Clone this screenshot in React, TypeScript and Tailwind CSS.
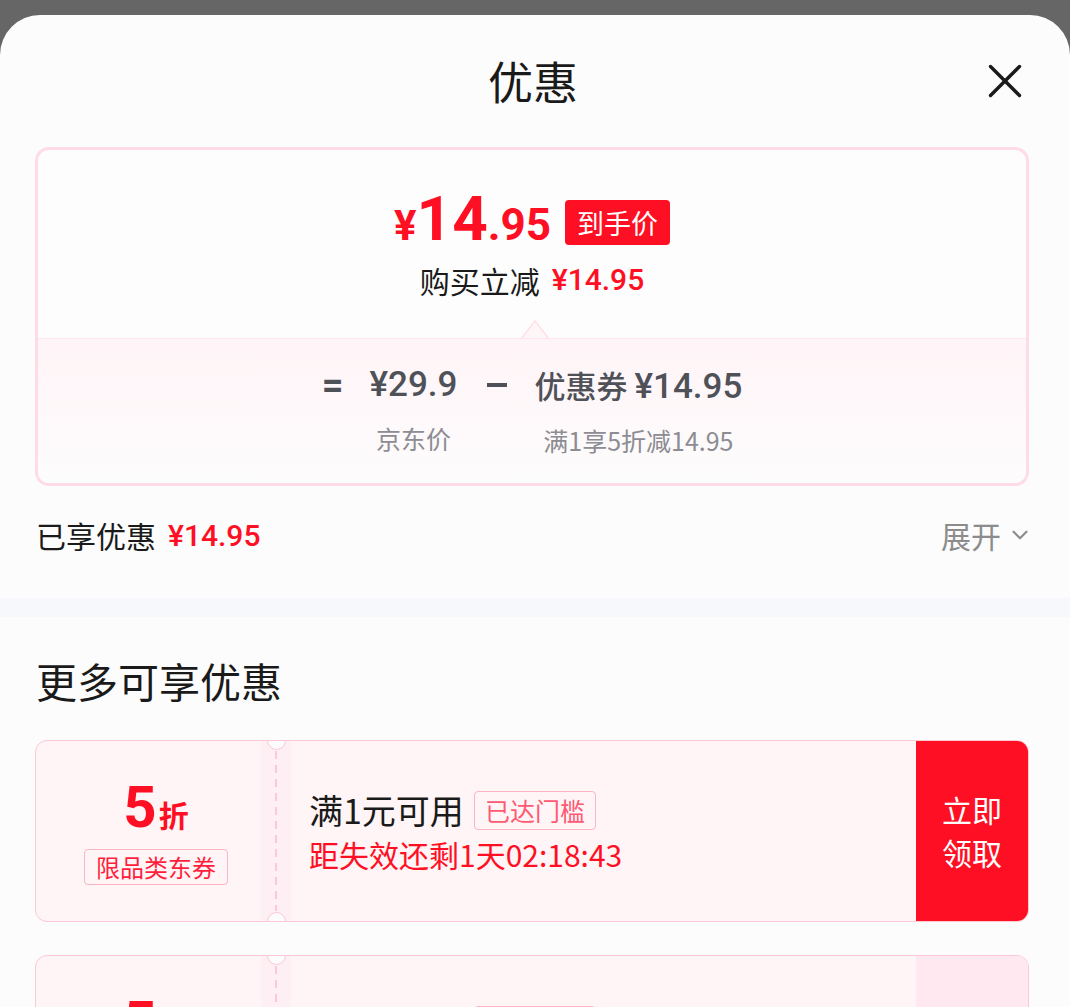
import { X, ChevronDown } from "lucide-react";

const cjk = "font-['Noto_Sans_CJK_SC',sans-serif]";
const num = "font-['Roboto','Noto_Sans_CJK_SC',sans-serif]";

interface CouponProps {
  active: boolean;
}

function Coupon({ active }: CouponProps) {
  return (
    <div className="relative mx-[35px] flex h-[182px] w-[994px] shrink-0 overflow-hidden rounded-[12px] border border-[#fcc8d5] bg-[#fff5f7]">
      {/* left: discount */}
      <div className="flex w-[225px] flex-col items-center justify-center pl-[15px]">
        <div className={`flex items-baseline font-bold text-[#ff0f23] ${num}`}>
          <span className="text-[58px] leading-[58px]">5</span>
          <span className={`ml-[2px] text-[30px] ${cjk}`}>折</span>
        </div>
        <span className="mt-[12px] rounded-[4px] border border-[#fdb4c3] px-[11px] text-[24px] leading-[34px] text-[#ff1e3c]">
          限品类东券
        </span>
      </div>

      {/* perforation */}
      <div className="flex w-[30px] justify-center bg-[#fdeff3]">
        <div className="mt-[10px] mb-[10px] w-[2px] bg-[repeating-linear-gradient(to_bottom,#fcc8d5_0_8px,transparent_8px_14px)]" />
      </div>
      <div className="absolute top-[-10px] left-[231px] h-[19px] w-[19px] rounded-full border border-[#fcc8d5] bg-[#fcfcfc]" />
      <div className="absolute bottom-[-10px] left-[231px] h-[19px] w-[19px] rounded-full border border-[#fcc8d5] bg-[#fcfcfc]" />

      {/* middle: rule */}
      <div className="flex flex-1 flex-col justify-center pl-[18px]">
        <div className="flex items-center">
          <span className="text-[34px] leading-[44px] text-[#1a1a1a]">满1元可用</span>
          <span className="ml-[10px] rounded-[4px] border border-[#fdb4c3] px-[10px] text-[25px] leading-[37px] text-[#ff5a73]">
            已达门槛
          </span>
        </div>
        <span className="mt-[2px] text-[30px] leading-[40px] text-[#ff0f23]">距失效还剩1天02:18:43</span>
      </div>

      {/* button */}
      <div
        className={`flex w-[112px] flex-col items-center justify-center text-[30px] leading-[43px] ${
          active ? "bg-[#ff0f23] text-white" : "bg-[#ffe8ef] text-[#ff0f23]"
        }`}
      >
        <span>立即</span>
        <span>领取</span>
      </div>
    </div>
  );
}

export default function App() {
  return (
    <div className={`h-[1007px] w-[1070px] overflow-hidden bg-[#666666] pt-[15px] ${cjk}`}>
      <div className="flex h-full flex-col rounded-t-[40px] bg-[#fcfcfc]">
        {/* header */}
        <div className="grid h-[132px] shrink-0 grid-cols-[1fr_auto_1fr] items-center">
          <div />
          <h1 className="pr-[4px] text-[45px] leading-[60px] text-[#1a1a1a]">优惠</h1>
          <div className="flex justify-end pr-[36px]">
            <X className="h-[58px] w-[58px] text-[#1a1a1a]" strokeWidth={1.4} />
          </div>
        </div>

        {/* price breakdown card */}
        <div className="mx-[35px] flex h-[339px] w-[994px] shrink-0 flex-col overflow-hidden rounded-[14px] border-[3px] border-[#ffdbe5] bg-[#fdfdfd]">
          <div className="relative flex h-[188px] flex-col items-center pt-[47px]">
            <div className="flex h-[50px] items-end">
              <div className={`flex items-baseline font-bold text-[#ff0f23] ${num}`}>
                <span className="text-[42px] leading-none">¥</span>
                <span className="text-[62px] leading-[50px]">14</span>
                <span className="text-[44px] leading-none">.95</span>
              </div>
              <span className="mb-[2px] ml-[14px] rounded-[4px] bg-[#ff0f23] px-[12px] text-[27px] leading-[45px] text-white">
                到手价
              </span>
            </div>
            <div className="mt-[15px] flex items-center text-[30px] leading-[36px]">
              <span className="text-[#1a1a1a]">购买立减</span>
              <span className={`ml-[12px] text-[30px] font-medium text-[#ff0f23] ${num}`}>¥14.95</span>
            </div>
            <svg className="absolute bottom-[-1px] left-[482px]" width="30" height="20" viewBox="0 0 30 20">
              <path d="M1 20 L15 2 L29 20 Z" fill="#fff6f8" stroke="#ffe0e8" strokeWidth="1.5" />
            </svg>
          </div>
          <div className="flex flex-1 justify-center border-t border-[#ffe8ee] bg-[linear-gradient(to_bottom,#fff4f7,#fdfcfc)] pt-[26px]">
            <div className="flex items-start">
              <span className={`text-[38px] leading-[40px] font-bold text-[#4f5159] ${num}`}>=</span>
              <div className="ml-[26px] flex flex-col items-center">
                <span className={`text-[35px] leading-[40px] font-medium text-[#4f5159] ${num}`}>¥29.9</span>
                <span className="mt-[18px] text-[25px] leading-[30px] text-[#8c8c93]">京东价</span>
              </div>
              <div className="ml-[30px] mt-[18px] h-[4px] w-[20px] bg-[#4f5159]" />
              <div className="ml-[27px] flex flex-col items-center">
                <span className="text-[31px] leading-[40px] font-medium text-[#4f5159]">
                  优惠券 <span className={`text-[35px] ${num}`}>¥14.95</span>
                </span>
                <span className="mt-[18px] text-[25px] leading-[30px] text-[#8c8c93]">满1享5折减14.95</span>
              </div>
            </div>
          </div>
        </div>

        {/* savings row */}
        <div className="mt-[29px] flex h-[40px] shrink-0 items-center justify-between pr-[37px] pl-[36px]">
          <div className="flex items-center text-[30px]">
            <span className="text-[#1a1a1a]">已享优惠</span>
            <span className={`ml-[12px] font-medium text-[#ff0f23] ${num}`}>¥14.95</span>
          </div>
          <div className="flex items-center text-[30px] text-[#8c8c8c]">
            <span>展开</span>
            <ChevronDown className="ml-[6px] h-[26px] w-[26px]" strokeWidth={2} />
          </div>
        </div>

        <div className="mt-[43px] h-[19px] shrink-0 bg-[#f7f8fc]" />

        <h2 className="shrink-0 px-[36px] pt-[38px] text-[41px] leading-[50px] text-[#1a1a1a]">更多可享优惠</h2>

        <div className="mt-[35px] flex flex-col gap-[33px]">
          <Coupon active />
          <Coupon active={false} />
        </div>
      </div>
    </div>
  );
}
